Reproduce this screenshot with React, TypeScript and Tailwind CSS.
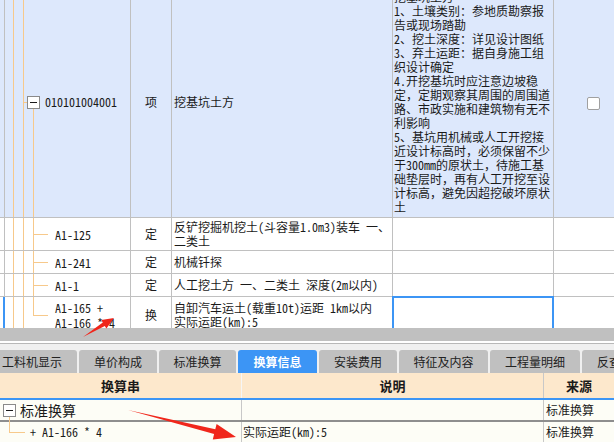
import React from "react";

function MinusBox({ className = "" }: { className?: string }) {
  return (
    <span
      className={`absolute flex h-[13px] w-[13px] items-center justify-center border border-[#8a8a8a] bg-white ${className}`}
    >
      <span className="h-px w-[7px] bg-[#1a1a1a]" />
    </span>
  );
}

const descLines = [
  "挖基坑土方",
  "1、土壤类别：参地质勘察报",
  "告或现场踏勘",
  "2、挖土深度：详见设计图纸",
  "3、弃土运距：据自身施工组",
  "织设计确定",
  "4.开挖基坑时应注意边坡稳",
  "定，定期观察其周围的周围道",
  "路、市政实施和建筑物有无不",
  "利影响",
  "5、基坑用机械或人工开挖接",
  "近设计标高时，必须保留不少",
  "于300mm的原状土，待施工基",
  "础垫层时，再有人工开挖至设",
  "计标高，避免因超挖破坏原状",
  "土",
];

function SubRow({
  h,
  code,
  type,
  name,
  last,
}: {
  h: string;
  code: string[];
  type: string;
  name: string[];
  last?: boolean;
}) {
  return (
    <div className={`flex ${h} border-b border-[#c0c0c0] bg-white`}>
      {last ? (
        <div className="w-[5px] shrink-0 border-r-2 border-[#3c95f5]" />
      ) : (
        <div className="w-[5px] shrink-0 border-r border-[#c0c0c0]" />
      )}
      <div className="relative flex w-[126px] shrink-0 flex-col justify-center border-r border-[#c0c0c0] pl-[50px] leading-[15px]">
        <span className="absolute left-[8px] top-0 bottom-0 w-px bg-[#f7c98b]" />
        <span className="absolute left-[18px] top-0 bottom-0 w-px bg-[#f7c98b]" />
        {last ? (
          <span className="absolute left-[28px] top-0 h-1/2 w-px bg-[#f7c98b]" />
        ) : (
          <span className="absolute left-[28px] top-0 bottom-0 w-px bg-[#f7c98b]" />
        )}
        <span className="absolute left-[28px] top-1/2 h-px w-[15px] bg-[#f7c98b]" />
        {code.map((c) => (
          <div key={c} className="whitespace-pre">
            {c}
          </div>
        ))}
      </div>
      <div className="flex w-[41px] shrink-0 items-center justify-center border-r border-[#c0c0c0]">
        {type}
      </div>
      <div className="flex w-[221px] shrink-0 flex-col justify-center border-r border-[#c0c0c0] pl-[2px] leading-[14px]">
        {name.map((n) => (
          <div key={n} className="whitespace-pre">
            {n}
          </div>
        ))}
      </div>
      <div className="relative w-[161px] shrink-0 border-r border-[#c0c0c0]">
        {last && (
          <span className="absolute -left-px -top-px -right-px -bottom-[4px] border-2 border-[#3c95f5]" />
        )}
      </div>
      <div className="flex-1" />
    </div>
  );
}

export default function App() {
  return (
    <div className="relative h-[442px] w-[614px] overflow-hidden bg-white font-['Noto_Sans_Mono_CJK_SC','Noto_Sans_CJK_SC',sans-serif] text-[12px] text-[#1a1a1a]">
      {/* top grid */}
      <div className="h-[328px] overflow-hidden">
        <div className="-mt-[13px]">
          <div className="flex h-[231px] border-b border-[#c0c0c0] bg-[#dde8fc]">
            <div className="w-[5px] shrink-0 border-r border-[#c0c0c0]" />
            <div className="relative flex w-[126px] shrink-0 items-center border-r border-[#c0c0c0] pl-[40px]">
              <span className="absolute left-[8px] top-0 bottom-0 w-px bg-[#f7c98b]" />
              <span className="absolute left-[18px] top-0 bottom-0 w-px bg-[#f7c98b]" />
              <span className="absolute left-[18px] top-1/2 h-px w-[4px] bg-[#f7c98b]" />
              <span className="absolute left-[28px] top-[calc(50%+6px)] bottom-0 w-px bg-[#f7c98b]" />
              <MinusBox className="left-[22px] top-[calc(50%-6px)]" />
              <span>010101004001</span>
            </div>
            <div className="flex w-[41px] shrink-0 items-center justify-center border-r border-[#c0c0c0]">
              项
            </div>
            <div className="flex w-[221px] shrink-0 items-center border-r border-[#c0c0c0] pl-[2px]">
              挖基坑土方
            </div>
            <div className="w-[161px] shrink-0 overflow-hidden border-r border-[#c0c0c0] py-[3px] pl-[1px] leading-[14px]">
              {descLines.map((l, i) => (
                <div key={i} className="whitespace-nowrap">
                  {l}
                </div>
              ))}
            </div>
            <div className="flex flex-1 items-center pl-[33px] pt-[3px]">
              <span className="h-[13px] w-[13px] rounded-[2px] border border-[#a0a0a0] bg-white" />
            </div>
          </div>
          <SubRow
            h="h-[33px]"
            code={["A1-125"]}
            type="定"
            name={["反铲挖掘机挖土(斗容量1.0m3)装车 一、", "二类土"]}
          />
          <SubRow h="h-[23px]" code={["A1-241"]} type="定" name={["机械钎探"]} />
          <SubRow
            h="h-[23px]"
            code={["A1-1"]}
            type="定"
            name={["人工挖土方 一、二类土 深度(2m以内)"]}
          />
          <SubRow
            h="h-[37px]"
            code={["A1-165 +", "A1-166 * 4"]}
            type="换"
            name={["自卸汽车运土(载重10t)运距 1km以内", "实际运距(km):5"]}
            last
          />
        </div>
      </div>

      {/* splitter */}
      <div className="h-[13px] bg-[#c0c0c0]" />
      <div className="h-[2px] bg-white" />
      <div className="h-px bg-[#b8b8b8]" />

      {/* tabs */}
      <div className="flex h-[29px] items-end gap-[2px] overflow-hidden whitespace-nowrap bg-[#f0f0f0] text-[#222]">
        <div className="-ml-[13px] flex h-[23px] w-[90px] shrink-0 items-center justify-center rounded-t-[3px] bg-[#c0c0c0]">
          工料机显示
        </div>
        <div className="flex h-[23px] w-[78px] shrink-0 items-center justify-center rounded-t-[3px] bg-[#c0c0c0]">
          单价构成
        </div>
        <div className="flex h-[23px] w-[77px] shrink-0 items-center justify-center rounded-t-[3px] bg-[#c0c0c0]">
          标准换算
        </div>
        <div className="flex h-[23px] w-[79px] shrink-0 items-center justify-center rounded-t-[3px] bg-[#3c95f5] font-bold text-white">
          换算信息
        </div>
        <div className="flex h-[23px] w-[78px] shrink-0 items-center justify-center rounded-t-[3px] bg-[#c0c0c0]">
          安装费用
        </div>
        <div className="flex h-[23px] w-[89px] shrink-0 items-center justify-center rounded-t-[3px] bg-[#c0c0c0]">
          特征及内容
        </div>
        <div className="flex h-[23px] w-[90px] shrink-0 items-center justify-center rounded-t-[3px] bg-[#c0c0c0]">
          工程量明细
        </div>
        <div className="flex h-[23px] w-[90px] shrink-0 items-center justify-start whitespace-nowrap rounded-t-[3px] bg-[#c0c0c0] pl-[15px]">
          反查图形工程量
        </div>
      </div>

      {/* header */}
      <div className="flex h-[25px] bg-[#fde8cc] text-[13px] font-bold">
        <div className="flex w-[242px] items-center justify-center border-r border-[#f6f6f6]">
          换算串
        </div>
        <div className="flex w-[302px] items-center justify-center border-r border-[#c8c8c8]">
          说明
        </div>
        <div className="flex flex-1 items-center justify-center">来源</div>
      </div>
      <div className="h-[2px] bg-[#3c95f5]" />

      <div className="relative">
        <div className="flex h-[20px] bg-[#fdfdf6]">
          <div className="relative flex w-[242px] items-center border-r border-[#c8c8c8] pl-[20px] text-[14px]">
            <MinusBox className="left-[3px] top-[4px]" />
            标准换算
          </div>
          <div className="w-[302px] border-r border-[#c8c8c8]" />
          <div className="flex flex-1 items-center pl-[2px]">标准换算</div>
        </div>
        <div className="h-[2px] bg-[#8e8e8e]" />
        <div className="flex h-[20px] bg-[#fdfdf6]">
          <div className="flex w-[242px] items-center whitespace-pre border-r border-[#c8c8c8] pl-[30px]">
            + A1-166 * 4
          </div>
          <div className="flex w-[302px] items-center border-r border-[#c8c8c8] pl-[1px]">
            实际运距(km):5
          </div>
          <div className="flex flex-1 items-center pl-[2px]">标准换算</div>
        </div>
        <span className="absolute left-[9px] top-[17px] h-[16px] w-px bg-[#f7c98b]" />
        <span className="absolute left-[9px] top-[32px] h-px w-[16px] bg-[#f7c98b]" />
      </div>

      {/* annotation arrows */}
      <svg
        className="pointer-events-none absolute left-0 top-0"
        width="614"
        height="442"
        viewBox="0 0 614 442"
      >
        <polygon
          fill="#f0261b"
          points="83,337 102.8,322.6 101.2,320 114,318 106.4,328.6 104.8,326"
        />
        <polygon
          fill="#f0261b"
          points="128,410 215.3,429.3 216.6,424 236,437 212.8,439.5 214.1,434.1"
        />
      </svg>
    </div>
  );
}
